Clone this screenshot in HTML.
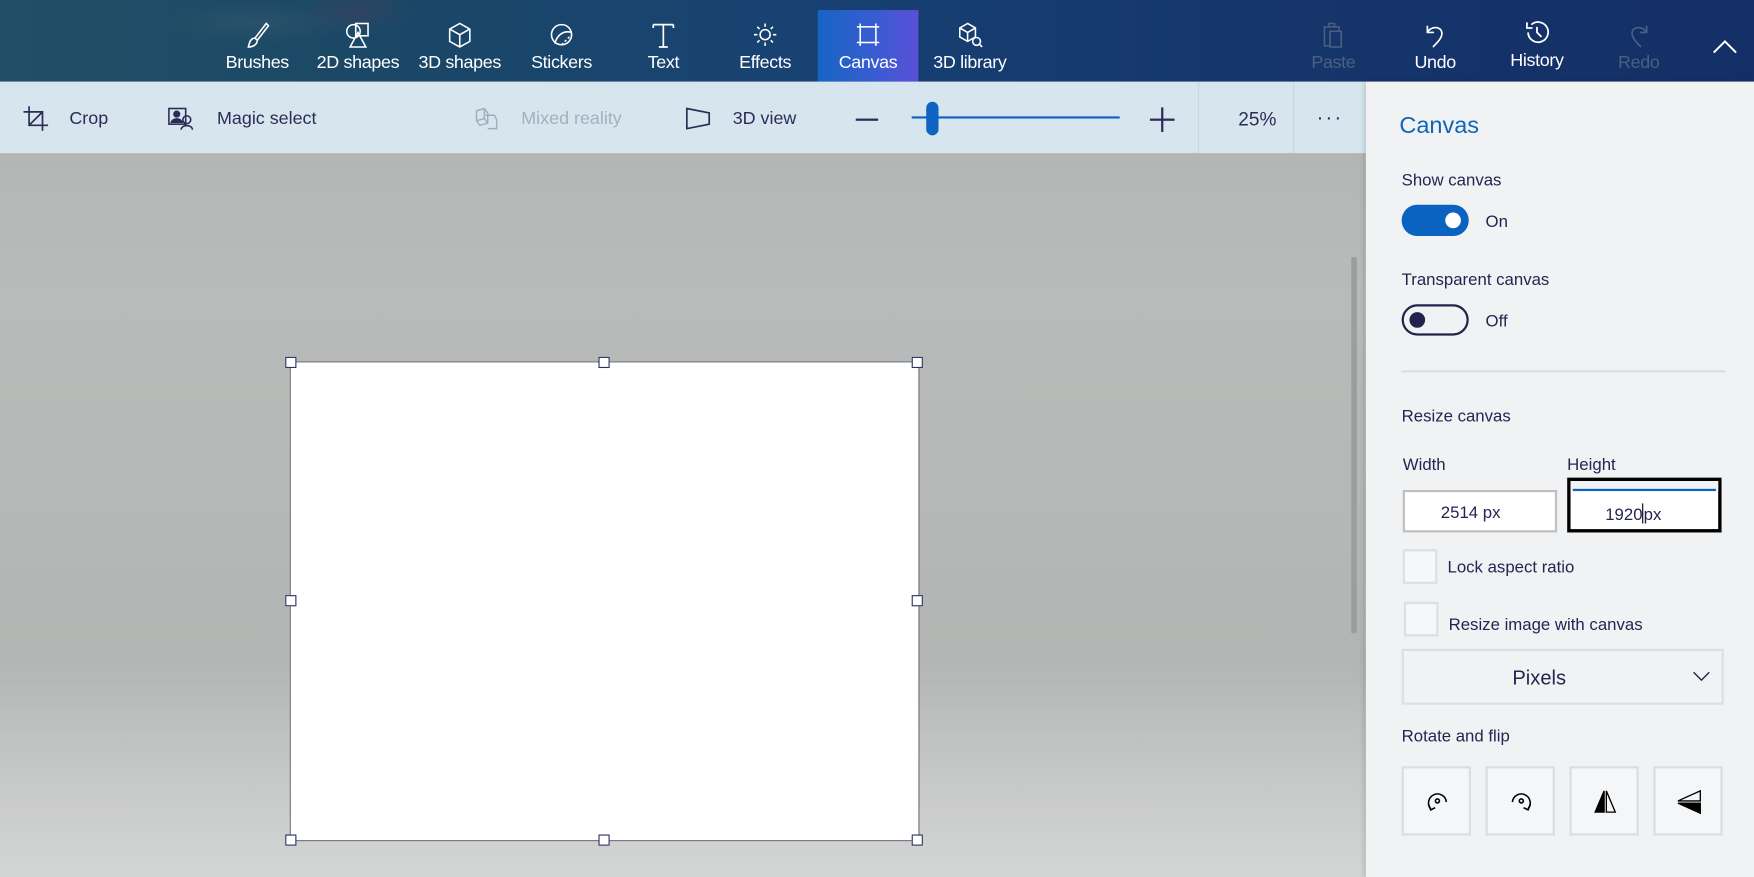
<!DOCTYPE html>
<html><head><meta charset="utf-8"><style>
html,body{margin:0;padding:0;width:1754px;height:877px;overflow:hidden;background:#b5b7b6}
#w{position:absolute;left:0;top:0;width:1568px;height:784px;transform:scale(1.11862);transform-origin:0 0;font-family:"Liberation Sans",sans-serif;}
.a{position:absolute}
#top{left:0;top:0;width:1568px;height:73px;background:linear-gradient(90deg,#224f66 0%,#1b4866 20%,#174272 45%,#15366c 70%,#142f66 100%)}
.tab{position:absolute;top:9px;width:90px;height:64px;color:#fff;font-size:16px;text-align:center}
.tab span{position:absolute;left:0;right:0;top:39px;white-space:nowrap;letter-spacing:-0.3px}
.tab svg{position:absolute;left:33px;top:10px}
#tb{left:0;top:73px;width:1221px;height:64px;background:#d7e6ee}
.ti{position:absolute;top:98px;font-size:16px;color:#2a2c55}
#cv{left:0;top:137px;width:1221px;height:647px;background:linear-gradient(180deg,#b4b6b5 0%,#b9bbba 20%,#b3b5b4 70%,#c5c7c6 85%,#d4d5d5 100%)}
#panel{left:1221px;top:73px;width:347px;height:711px;background:#f1f2f4;box-shadow:-2px 0 4px rgba(0,0,0,.12)}
.lb{position:absolute;font-size:15px;color:#242652}
.h{position:absolute;width:10px;height:10px;border:1px solid #2f3060;background:#fff;box-sizing:border-box}
.rb{position:absolute;top:685px;width:62px;height:62px;border:2px solid #dcdde0;background:#f5f6f8;box-sizing:border-box}
.rb svg{position:absolute;left:16px;top:16px}
</style></head><body><div id="w">
<div id="top" class="a"></div>
<div class="a" style="left:140px;top:0;width:180px;height:40px;background:radial-gradient(ellipse at center,rgba(120,120,130,.15),rgba(0,0,0,0) 70%)"></div>
<div class="a" style="left:270px;top:-10px;width:100px;height:40px;background:radial-gradient(ellipse at center,rgba(140,50,70,.18),rgba(0,0,0,0) 70%)"></div>

<div class="tab" style="left:185px"><svg width="24" height="26" viewBox="0 0 24 26" fill="none" stroke="#fff" stroke-width="1.4"><path d="M20 2 L10 15 L12 17 L22 4 Z"/><path d="M10 15 C6 15 5 19 4 23 C8 23 12 21 12 17"/></svg><span>Brushes</span></div>
<div class="tab" style="left:275px"><svg width="24" height="26" viewBox="0 0 24 26" fill="none" stroke="#fff" stroke-width="1.4"><circle cx="8" cy="9" r="6"/><rect x="10" y="2" width="11" height="11"/><path d="M12 10 L5 23 H19 Z"/></svg><span>2D shapes</span></div>
<div class="tab" style="left:366px"><svg width="24" height="26" viewBox="0 0 24 26" fill="none" stroke="#fff" stroke-width="1.4"><path d="M12 2 L21 7 V18 L12 23 L3 18 V7 Z M3 7 L12 12 L21 7 M12 12 V23"/></svg><span>3D shapes</span></div>
<div class="tab" style="left:457px"><svg width="24" height="26" viewBox="0 0 24 26" fill="none" stroke="#fff" stroke-width="1.4"><circle cx="12" cy="12" r="9"/><path d="M6 20 C8 12 14 8 21 10"/><path d="M12 21 L21 12" stroke-dasharray="2 2"/></svg><span>Stickers</span></div>
<div class="tab" style="left:548px"><svg width="24" height="26" viewBox="0 0 24 26" fill="none" stroke="#fff" stroke-width="1.5"><path d="M3 3 H21 M3 3 V6 M21 3 V6 M12 3 V23 M8 23 H16"/></svg><span>Text</span></div>
<div class="tab" style="left:639px"><svg width="24" height="26" viewBox="0 0 24 26" fill="none" stroke="#fff" stroke-width="1.4"><circle cx="12" cy="12" r="4.5"/><path d="M12 2V5M12 19V22M2 12H5M19 12H22M5 5L7 7M17 17L19 19M19 5L17 7M7 17L5 19"/></svg><span>Effects</span></div>
<div class="tab" style="left:731px;background:linear-gradient(90deg,#1565c4,#3c5bd2 60%,#5a4fd8)"><svg width="24" height="26" viewBox="0 0 24 26" fill="none" stroke="#fff" stroke-width="1.4"><rect x="5" y="5" width="14" height="14"/><path d="M2 5H5M19 5H22M2 19H5M19 19H22M5 2V5M19 2V5M5 19V22M19 19V22"/></svg><span>Canvas</span></div>
<div class="tab" style="left:822px"><svg width="24" height="26" viewBox="0 0 24 26" fill="none" stroke="#fff" stroke-width="1.4"><path d="M10 2 L17 6 V14 L10 18 L3 14 V6 Z M3 6 L10 10 L17 6 M10 10 V18"/><circle cx="18" cy="18" r="3.5"/><path d="M20.5 20.5 L23 23"/></svg><span>3D library</span></div>

<div class="tab" style="left:1147px;color:#4a6080"><svg width="24" height="26" viewBox="0 0 24 26" fill="none" stroke="#4a6080" stroke-width="1.4"><rect x="4" y="5" width="13" height="17"/><rect x="9" y="9" width="10" height="14" fill="#17356c"/><path d="M8 5 V2 H13 V5"/></svg><span>Paste</span></div>
<div class="tab" style="left:1238px"><svg width="24" height="26" viewBox="0 0 24 26" fill="none" stroke="#fff" stroke-width="1.5"><path d="M5 4 V10 H11 M5 10 C8 4 18 4 18 11 C18 15 14 19 10 23"/></svg><span>Undo</span></div>
<div class="tab" style="left:1329px"><svg width="24" height="26" viewBox="0 0 24 26" fill="none" stroke="#fff" stroke-width="1.6" style="top:8px"><path d="M4 12 A9 9 0 1 0 7 5 M3 3 V8 H8 M12 7 V12 L16 16"/></svg><span style="top:37px">History</span></div>
<div class="tab" style="left:1420px;color:#4a6080"><svg width="24" height="26" viewBox="0 0 24 26" fill="none" stroke="#4a6080" stroke-width="1.5"><path d="M19 4 V10 H13 M19 10 C16 4 6 4 6 11 C6 15 10 19 14 23"/></svg><span>Redo</span></div>
<svg class="a" style="left:1530px;top:34px" width="24" height="16" viewBox="0 0 24 16" fill="none" stroke="#fff" stroke-width="1.8"><path d="M2 13 L12 3 L22 13"/></svg>

<div id="tb" class="a"></div>
<svg class="a" style="left:20px;top:94px" width="24" height="24" viewBox="0 0 24 24" fill="none" stroke="#2a2c55" stroke-width="1.5"><path d="M6 1 V18 H23 M1 6 H18 V23 M6 18 L18 6"/></svg>
<div class="ti" style="left:62px">Crop</div>
<svg class="a" style="left:150px;top:95px" width="24" height="22" viewBox="0 0 24 22" fill="none" stroke="#2a2c55" stroke-width="1.4"><rect x="1" y="2" width="15" height="14"/><circle cx="8" cy="7" r="2.5" fill="#2a2c55"/><path d="M3 15 C4 10 12 10 13 15" fill="#2a2c55"/><circle cx="17" cy="12" r="3.5"/><path d="M12 21 C12 16 22 16 22 21"/></svg>
<div class="ti" style="left:194px">Magic select</div>
<svg class="a" style="left:424px;top:95px" width="22" height="22" viewBox="0 0 22 22" fill="none" stroke="#a0aebb" stroke-width="1.3"><path d="M2 4 L9 2 L12 6 V15 L5 17 L2 13 Z M9 2 V11 M2 13 L9 11 L12 15"/><path d="M10 8 L18 8 L20 12 V20 H12"/></svg>
<div class="ti" style="left:466px;color:#a3b0bd">Mixed reality</div>
<svg class="a" style="left:612px;top:95px" width="24" height="22" viewBox="0 0 24 22" fill="none" stroke="#2a2c55" stroke-width="1.5"><path d="M2 2 L22 6 V16 L2 20 Z"/></svg>
<div class="ti" style="left:655px">3D view</div>
<div class="a" style="left:765px;top:106px;width:20px;height:1.5px;background:#2a2c55"></div>
<div class="a" style="left:815px;top:104px;width:186px;height:2px;background:#1565c0"></div>
<div class="a" style="left:828px;top:91px;width:11px;height:30px;border-radius:6px;background:#0f63c1"></div>
<div class="a" style="left:1028px;top:106px;width:22px;height:1.5px;background:#2a2c55"></div>
<div class="a" style="left:1038px;top:96px;width:1.5px;height:22px;background:#2a2c55"></div>
<div class="a" style="left:1071px;top:73px;width:1px;height:64px;background:#c8d6de"></div>
<div class="ti" style="left:1107px;top:97px;font-size:17px">25%</div>
<div class="a" style="left:1156px;top:73px;width:1px;height:64px;background:#c8d6de"></div>
<div class="ti" style="left:1177px;top:95px;font-size:18px;letter-spacing:2px">···</div>

<div id="cv" class="a"></div>
<div class="a" style="left:1208px;top:230px;width:5px;height:336px;background:#9c9e9e"></div>
<div class="a" style="left:259px;top:323px;width:563px;height:429px;background:#fff;border:1px solid #6d6e80;box-sizing:border-box"></div>
<div class="h" style="left:255px;top:319px"></div><div class="h" style="left:535px;top:319px"></div><div class="h" style="left:815px;top:319px"></div>
<div class="h" style="left:255px;top:532px"></div><div class="h" style="left:815px;top:532px"></div>
<div class="h" style="left:255px;top:746px"></div><div class="h" style="left:535px;top:746px"></div><div class="h" style="left:815px;top:746px"></div>

<div id="panel" class="a"></div>
<div class="a" style="left:1251px;top:101px;font-size:21px;color:#1065b8">Canvas</div>
<div class="lb" style="left:1253px;top:153px">Show canvas</div>
<div class="a" style="left:1253px;top:183px;width:60px;height:28px;border-radius:14px;background:#0b63c1"></div>
<div class="a" style="left:1292px;top:190px;width:14px;height:14px;border-radius:7px;background:#fff"></div>
<div class="lb" style="left:1328px;top:190px">On</div>
<div class="lb" style="left:1253px;top:242px">Transparent canvas</div>
<div class="a" style="left:1253px;top:272px;width:60px;height:28px;border-radius:14px;border:2.5px solid #22224e;box-sizing:border-box"></div>
<div class="a" style="left:1260px;top:279px;width:14px;height:14px;border-radius:7px;background:#22224e"></div>
<div class="lb" style="left:1328px;top:279px">Off</div>
<div class="a" style="left:1253px;top:331px;width:290px;height:2px;background:#dcdde0"></div>
<div class="lb" style="left:1253px;top:364px">Resize canvas</div>
<div class="lb" style="left:1254px;top:407px">Width</div>
<div class="lb" style="left:1401px;top:407px">Height</div>
<div class="a" style="left:1254px;top:438px;width:138px;height:38px;background:#fff;border:2px solid #c0c0c0;box-sizing:border-box"></div>
<div class="lb" style="left:1288px;top:450px">2514 px</div>
<div class="a" style="left:1401px;top:427px;width:138px;height:49px;background:#fff;border:3px solid #000;box-sizing:border-box"></div>
<div class="a" style="left:1404px;top:430px;width:132px;height:8px;background:#f1f2f4"></div>
<div class="a" style="left:1406px;top:437px;width:128px;height:2px;background:#0b63c1"></div>
<div class="lb" style="left:1435px;top:450px">1920<span style="display:inline-block;width:1px;height:18px;background:#000;vertical-align:-3px"></span>px</div>
<div class="a" style="left:1254px;top:491px;width:31px;height:31px;border:2px solid #dcdfe3;background:#f6f7f8;box-sizing:border-box"></div>
<div class="lb" style="left:1294px;top:499px">Lock aspect ratio</div>
<div class="a" style="left:1255px;top:538px;width:31px;height:31px;border:2px solid #dcdfe3;background:#f6f7f8;box-sizing:border-box"></div>
<div class="lb" style="left:1295px;top:550px">Resize image with canvas</div>
<div class="a" style="left:1253px;top:580px;width:288px;height:50px;border:2px solid #dcdfe3;box-sizing:border-box"></div>
<div class="a" style="left:1352px;top:596px;font-size:18px;color:#242652">Pixels</div>
<svg class="a" style="left:1512px;top:598px" width="18" height="12" viewBox="0 0 18 12" fill="none" stroke="#242652" stroke-width="1.3"><path d="M2 3 L9 10 L16 3"/></svg>
<div class="lb" style="left:1253px;top:650px">Rotate and flip</div>
<div class="rb" style="left:1253px"><svg width="28" height="28" viewBox="0 0 28 28" fill="none" stroke="#000" stroke-width="1.4"><path d="M22 14 A8 8 0 1 0 8 20"/><circle cx="14" cy="13" r="1.8"/><path d="M6 16 L8 21 L12 19"/></svg></div>
<div class="rb" style="left:1328px"><svg width="28" height="28" viewBox="0 0 28 28" fill="none" stroke="#000" stroke-width="1.4"><path d="M6 14 A8 8 0 1 1 20 20"/><circle cx="14" cy="13" r="1.8"/><path d="M22 16 L20 21 L16 19"/></svg></div>
<div class="rb" style="left:1403px"><svg width="28" height="28" viewBox="0 0 28 28" stroke="#000" stroke-width="1.2"><path d="M13 4 L5 23 H13 Z" fill="#000"/><path d="M15 4 L23 23 H15 Z" fill="none"/></svg></div>
<div class="rb" style="left:1478px"><svg width="28" height="28" viewBox="0 0 28 28" stroke="#000" stroke-width="1.2"><path d="M24 4 L4 13 H24 Z" fill="none"/><path d="M24 15 L4 15 L24 24 Z" fill="#000"/></svg></div>
</div></body></html>
